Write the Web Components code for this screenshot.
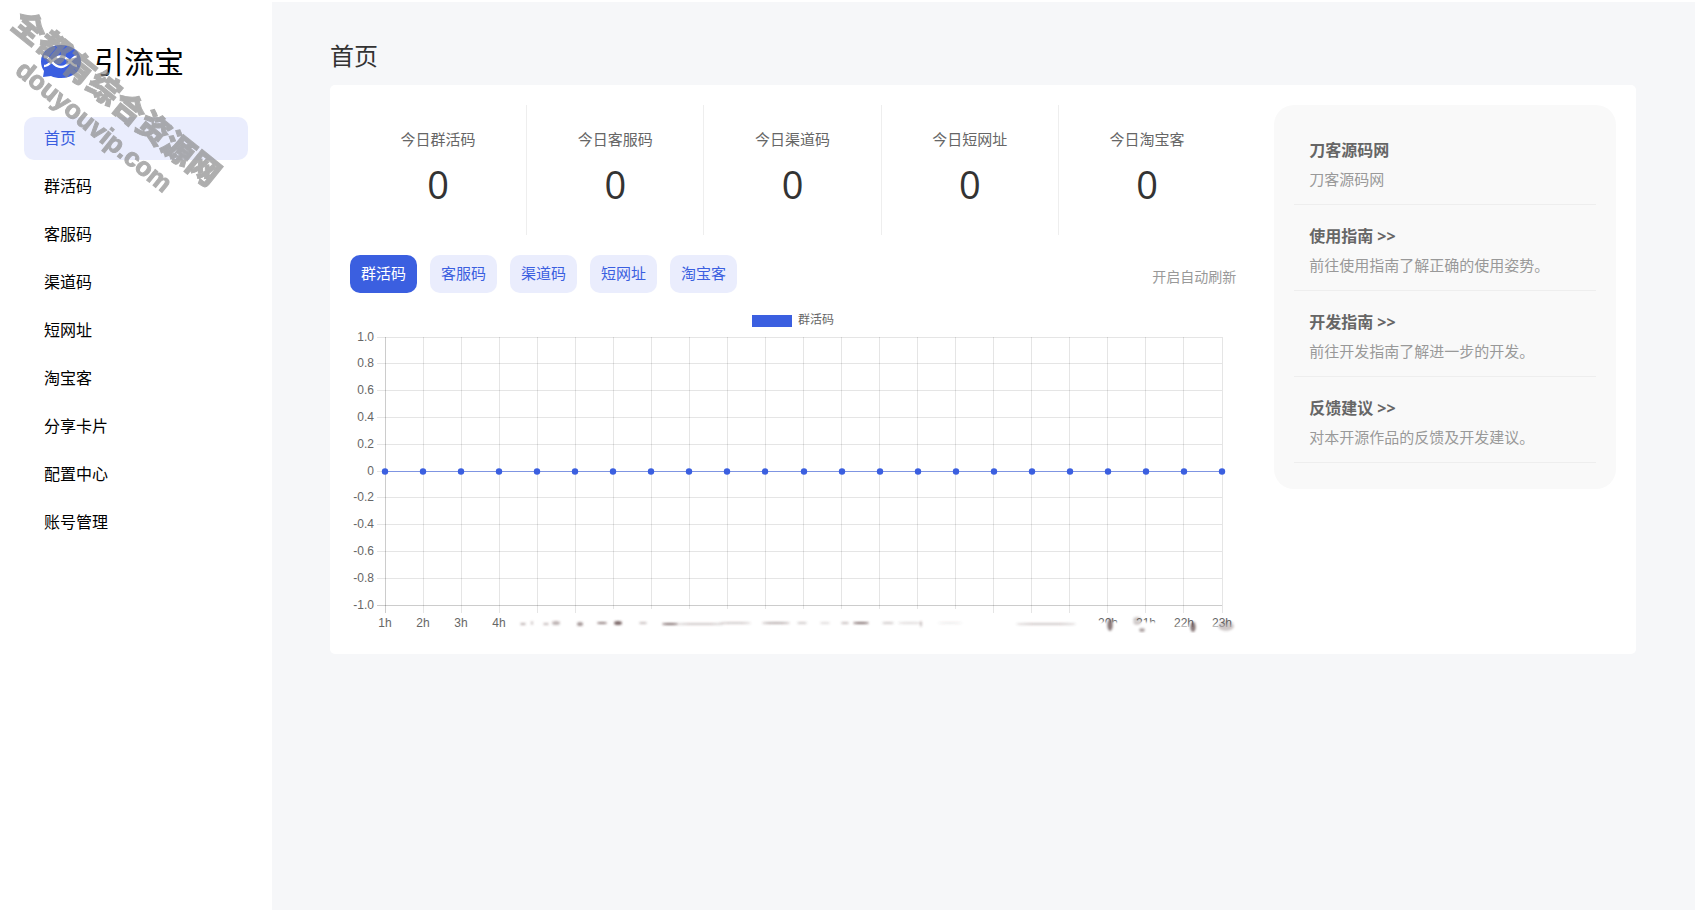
<!DOCTYPE html>
<html lang="zh-CN">
<head>
<meta charset="utf-8">
<title>引流宝</title>
<style>
html,body{margin:0;height:100%}
body{font-family:"Open Sans","Noto Sans CJK SC",sans-serif;color:#333;background:#fff}
</style>
</head>
<body>
<app-shell>
  <side-bar slot="side">
    <brand-logo>引流宝</brand-logo>
    <nav-item active>首页</nav-item>
    <nav-item>群活码</nav-item>
    <nav-item>客服码</nav-item>
    <nav-item>渠道码</nav-item>
    <nav-item>短网址</nav-item>
    <nav-item>淘宝客</nav-item>
    <nav-item>分享卡片</nav-item>
    <nav-item>配置中心</nav-item>
    <nav-item>账号管理</nav-item>
  </side-bar>
  <span slot="title">首页</span>
  <dash-board>
    <stat-card slot="stats" label="今日群活码">0</stat-card>
    <stat-card slot="stats" label="今日客服码">0</stat-card>
    <stat-card slot="stats" label="今日渠道码">0</stat-card>
    <stat-card slot="stats" label="今日短网址">0</stat-card>
    <stat-card slot="stats" label="今日淘宝客">0</stat-card>
    <tab-button slot="tabs" active>群活码</tab-button>
    <tab-button slot="tabs">客服码</tab-button>
    <tab-button slot="tabs">渠道码</tab-button>
    <tab-button slot="tabs">短网址</tab-button>
    <tab-button slot="tabs">淘宝客</tab-button>
    <line-chart slot="chart" label="群活码"></line-chart>
    <info-item slot="info" heading="刀客源码网">刀客源码网</info-item>
    <info-item slot="info" heading="使用指南 &gt;&gt;" link>前往使用指南了解正确的使用姿势。</info-item>
    <info-item slot="info" heading="开发指南 &gt;&gt;" link>前往开发指南了解进一步的开发。</info-item>
    <info-item slot="info" heading="反馈建议 &gt;&gt;" link>对本开源作品的反馈及开发建议。</info-item>
  </dash-board>
</app-shell>
<water-mark><span slot="name">全都有综合资源网</span><span slot="site">douyouvip.com</span></water-mark>
<script>
const define = (name, html, setup) => customElements.define(name, class extends HTMLElement {
  connectedCallback() {
    if (this.shadowRoot) return;
    const root = this.attachShadow({ mode: 'open' });
    root.innerHTML = html;
    if (setup) setup(this, root);
  }
});

define('app-shell', `<style>
:host{display:grid;grid-template-columns:272px 1fr;min-height:100vh}
main{background:#f6f7f9;margin-top:2px;padding:32px 59px 0 58px;min-width:0}
h1{margin:0 0 7px;font-size:24px;line-height:44px;font-weight:400;color:#333}
</style><slot name="side"></slot><main><h1><slot name="title"></slot></h1><slot></slot></main>`);

define('side-bar', `<style>
:host{display:block;padding:40px 24px 0}
nav{display:flex;flex-direction:column;gap:5px}
</style><nav><slot></slot></nav>`);

define('brand-logo', `<style>
:host{display:flex;align-items:center;gap:12px;height:40px;padding-left:16px;margin-bottom:32px;font-size:30px;color:#000}
svg{flex:none}
</style><svg width="42" height="36" viewBox="0 0 42 36" aria-hidden="true">
<path d="M21 3C33 3 41 10 41 19.500S33 36 21 36c-4 0-7-.6-10-2L3 35l1-6C2 26 1 23 1 19.500 1 10 9 3 21 3z" fill="#3b5fe0"/>
<path d="M4 14.500C11 14 12 25 21 25S31 14 37 14.500M4 24C11 24 13 14.500 21 14.500S31 24 37 24" fill="none" stroke="#fff" stroke-width="2.400"/></svg><slot></slot>`);

define('nav-item', `<style>
:host{display:block}
a{display:block;height:43px;line-height:43px;padding:0 20px;border-radius:10px;font-size:16px;color:#000;text-decoration:none}
:host([active]) a{background:#eaedfd;color:#3b5fe0}
</style><a href="#"><slot></slot></a>`);

define('dash-board', `<style>
:host{display:flex;justify-content:space-between;align-items:flex-start;background:#fff;border-radius:5px;padding:20px 20px 21px}
.left{width:70%;min-width:0}
.stats{display:grid;grid-template-columns:repeat(5,1fr)}
.bar{display:flex;gap:13px;align-items:center;margin-top:20px}
.refresh{margin-left:auto;padding-top:6px;font-size:14px;line-height:20px;color:#999;text-decoration:none}
aside{box-sizing:border-box;width:27%;background:#f9f9f9;border-radius:20px;padding:14px 20px 26px}
</style><div class="left"><div class="stats"><slot name="stats"></slot></div>
<div class="bar"><slot name="tabs"></slot><a class="refresh" href="#">开启自动刷新</a></div>
<slot name="chart"></slot></div><aside><slot name="info"></slot></aside>`);

define('stat-card', `<style>
:host{display:block;height:130px;box-sizing:border-box;padding-top:22px;text-align:center;border-right:1px solid #eee}
:host(:last-of-type){border-right-color:transparent}
p{margin:0;font-size:15px;line-height:24px;color:#666}
b{display:block;font-weight:400;font-size:38px;line-height:66px;color:#333}
</style><p></p><b><slot></slot></b>`, (el, root) => {
  root.querySelector('p').textContent = el.getAttribute('label');
});

define('tab-button', `<style>
:host{display:block}
button{display:block;border:0;margin:0;height:38px;padding:0 11px 2px;border-radius:10px;background:#eaedfd;color:#3b5fe0;font:15px/36px "Open Sans","Noto Sans CJK SC",sans-serif}
:host([active]) button{background:#3b5fe0;color:#fff}
</style><button type="button"><slot></slot></button>`);

define('info-item', `<style>
:host{display:block;border-bottom:1px solid #eee;padding:18px 15px 12px}
h2{margin:0;font-size:16px;line-height:26px;font-weight:700;color:#666}
h2 a{color:inherit;text-decoration:none}
p{margin:3px 0 0;font-size:15px;line-height:26px;color:#999}
</style><h2></h2><p><slot></slot></p>`, (el, root) => {
  const h = root.querySelector('h2');
  let target = h;
  if (el.hasAttribute('link')) {
    target = h.appendChild(document.createElement('a'));
    target.href = '#';
  }
  target.textContent = el.getAttribute('heading');
});

define('line-chart', `<style>
:host{display:block;margin-top:20px}
svg{display:block;width:100%;height:320px;font:12px "Liberation Sans","Noto Sans CJK SC",sans-serif}
</style><svg role="img"></svg>`, (el, root) => {
  const svg = root.querySelector('svg');
  const draw = () => {
    const w = svg.clientWidth, left = 35, right = w - 14, top = 24, bottom = 292;
    const crisp = v => Math.floor(v) + 0.5;
    const mid = Math.round((left + right) / 2);
    let s = `<rect x="${mid - 52}" y="2" width="40" height="12" fill="#3b5fe0"/>
      <text x="${mid - 6}" y="11" fill="#666">${el.getAttribute('label')}</text>`;
    for (let i = 0; i <= 10; i++) {
      const y = crisp(top + (bottom - top) * i / 10);
      const v = i === 5 ? '0' : (1 - i * 0.2).toFixed(1);
      s += `<path d="M${left - 8} ${y}H${right}" stroke="#000" stroke-opacity="${i === 10 ? 0.2 : 0.1}"/>
        <text x="${left - 11}" y="${Math.round(y + 3)}" text-anchor="end" fill="#666">${v}</text>`;
    }
    let dots = '';
    for (let i = 0; i < 23; i++) {
      const px = left + (right - left) * i / 22, x = crisp(px);
      const end = i > 5 && i < 16 ? 296 : 300;
      s += `<path d="M${x} ${top}V${end}" stroke="#000" stroke-opacity="${i ? 0.1 : 0.2}"/>`;
      if (i < 4 || i > 18) s += `<text x="${Math.round(px)}" y="314" text-anchor="middle" fill="#666">${i + 1}h</text>`;
      dots += `<circle cx="${Math.round(px)}" cy="158.500" r="3.200" fill="#3b5fe0"/>`;
    }
    s += `<path d="M${left} 158.500H${right}" stroke="#3b5fe0" stroke-opacity=".6"/>${dots}`;
    // worn strip over the hour labels: a white veil, then faint marks [x, y, rx, ry, opacity]
    const marks = [[173,311,3,1,.45],[182,310,1,2,.35],[196,311,3,1,.4],[206,310,4,2,.4],[230,311,3,2,.55],[252,310,5,1,.7],[268,310,4,2,.8],[293,310,4,1,.35],
      [320,311,8,1,.8],[350,311,24,1,.3],[385,310,16,1,.3],[426,310,14,1,.45],[452,310,5,1,.3],[475,310,5,1,.2],[495,310,4,1,.35],[511,310,8,1,.8],
      [538,310,6,1,.3],[560,310,12,1,.2],[571,311,1,3,.35],[600,310,12,1,.1],[696,311,30,1,.3],[760,312,3,6,.7],[787,308,4,4,.3],[792,317,3,2,.5],[843,314,3,5,.7],[876,313,8,5,.3]];
    s += `<defs><filter id="soft" x="-50%" y="-100%" width="200%" height="300%"><feGaussianBlur stdDeviation="1"/></filter></defs>
      <g filter="url(#soft)"><rect x="735" y="309" width="82" height="9" fill="#fff"/><rect x="826" y="312" width="60" height="5" fill="#fff" opacity=".6"/>
      ${marks.map(([x, y, rx, ry, o]) => `<ellipse cx="${x}" cy="${y}" rx="${rx}" ry="${ry}" fill="#5c4444" opacity="${o}"/>`).join('')}</g>`;
    svg.innerHTML = s;
  };
  draw();
  new ResizeObserver(draw).observe(el);
});

define('water-mark', `<style>
:host{position:absolute;left:30px;top:2px;transform:rotate(39deg);transform-origin:0 0;pointer-events:none;white-space:nowrap;color:#8c8c8c;opacity:.7;font-weight:900;-webkit-text-stroke:1px #8c8c8c}
div{font-size:32px;line-height:40px}
.site{font:700 26px/32px "Liberation Sans",sans-serif;padding-left:32px}
</style><div><slot name="name"></slot></div><div class="site"><slot name="site"></slot></div>`);
</script>
</body>
</html>
